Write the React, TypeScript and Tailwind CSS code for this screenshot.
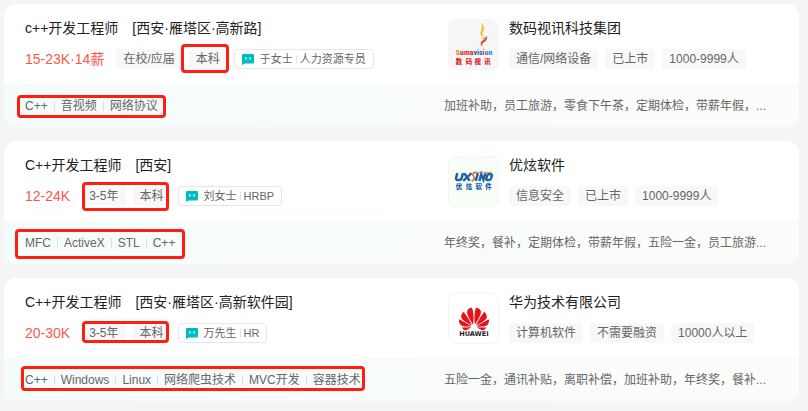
import { ReactNode } from "react";
import { SiHuawei } from "react-icons/si";

type Job = {
  id: number;
  title: string;
  area: string;
  salary: string;
  plainTags: string[];
  markedTags: string[];
  tagMark: string;
  boss: string;
  bossRole: string;
  skills: string[];
  skillMark: string;
  company: string;
  companyTags: string[];
  benefits: string;
  logo: ReactNode;
  logoStyle: string;
};

function SumavisionLogo() {
  return (
    <svg viewBox="0 0 50 50" className="h-full w-full" role="img" aria-label="Sumavision">
      <path
        d="M33.200 2.500c2.600 3.500 3.300 6.500 1 10.500-.6 1.800.2 3.200 1.600 3.800-2.900.2-4.300-1.800-3.400-4.600 1.300-3.700 1.600-6.500.8-9.700z"
        fill="#fbb81c"
      />
      <path
        d="M38.600 16c1 4-1.200 5.600-3.300 7-1.500 1-1.800 2-1 4-2.800-2-2.300-4.700 0-6.200 2-1.300 3.600-2.600 4.300-4.800z"
        fill="#e8432a"
      />
      <path d="M33.400 17.600c1.800 1 3.600.6 5.100-1.400-.3 2.900-3.300 4.200-5.100 1.400z" fill="#f2742a" />
      <text
        x="7"
        y="36"
        fontFamily="'Liberation Sans Narrow', 'Roboto Condensed', 'Liberation Sans', sans-serif"
        fontWeight="700"
        fontSize="8"
      >
        <tspan fill="#ee7a1c">S</tspan>
        <tspan fill="#e01c24">uma</tspan>
        <tspan fill="#2558ae">vis</tspan>
        <tspan fill="#e01c24">i</tspan>
        <tspan fill="#1c7cc8">on</tspan>
      </text>
      <text
        x="7 17 26 36"
        y="44.500"
        fontFamily="'Noto Sans CJK SC', sans-serif"
        fontWeight="900"
        fontSize="6.500"
        fill="#dc2430"
      >
        数码视讯
      </text>
    </svg>
  );
}

function UxsinoLogo() {
  return (
    <svg viewBox="0 0 50 50" className="h-full w-full" role="img" aria-label="UXSINO">
      <path d="M24 15h20v1H25z" fill="#e98a4a" />
      <g fill="none" stroke="#1c62a8" strokeWidth="2.500">
        <path d="M8.500 16.500 7.200 21.300Q6.900 23.400 9 23.400h1.400q2 0 2.600-2.100l1.300-4.800" />
        <path d="M15.500 16.500l5.500 7.800M23 16.500l-8.500 7.800" />
        <path d="M29.500 16.500l-2.200 7.800" />
        <path d="M31 24.500l1.900-6.800 2.300 5.600 1.900-6.700" />
        <path d="M40.300 17.700h2.200q1.600 0 1.200 1.600l-.8 2.600q-.4 1.500-2 1.500h-1.700q-1.500 0-1.100-1.600l.7-2.500q.4-1.600 1.500-1.600z" />
      </g>
      <path d="M28 15.600c-3.500.6-4.600 2.100-3 4 1.400 1.700 1 3.400-2 5" fill="none" stroke="#e4702c" strokeWidth="1.800" />
      <text
        x="7 17 27 37"
        y="33"
        fontFamily="'Noto Sans CJK SC', sans-serif"
        fontWeight="900"
        fontSize="6.500"
        fill="#1c62a8"
      >
        优炫软件
      </text>
    </svg>
  );
}

function HuaweiLogo() {
  return (
    <div className="flex h-full flex-col items-center justify-end pb-1.5">
      <SiHuawei className="h-[30px] w-[30px] text-[#e3141c]" aria-hidden="true" />
      <svg viewBox="0 0 32 7" className="-mt-1 h-[7px] w-8" role="img" aria-label="HUAWEI">
        <text
          x="16"
          y="6"
          textAnchor="middle"
          fontFamily="'DejaVu Sans', sans-serif"
          fontWeight="700"
          fontSize="6.500"
          fill="#1c1c1c"
        >
          HUAWEI
        </text>
      </svg>
    </div>
  );
}

const jobs: Job[] = [
  {
    id: 1,
    title: "c++开发工程师",
    area: "[西安·雁塔区·高新路]",
    salary: "15-23K·14薪",
    plainTags: ["在校/应届"],
    markedTags: ["本科"],
    tagMark: "-top-[5px] -bottom-1 -left-2 -right-0.5",
    boss: "于女士",
    bossRole: "人力资源专员",
    skills: ["C++", "音视频", "网络协议"],
    skillMark: "-top-0.5 -bottom-[3px] -left-2 -right-2",
    company: "数码视讯科技集团",
    companyTags: ["通信/网络设备", "已上市", "1000-9999人"],
    benefits: "加班补助，员工旅游，零食下午茶，定期体检，带薪年假，...",
    logo: <SumavisionLogo />,
    logoStyle: "border-[#f6f6f6] bg-[#f6f6f6]",
  },
  {
    id: 2,
    title: "C++开发工程师",
    area: "[西安]",
    salary: "12-24K",
    plainTags: [],
    markedTags: ["3-5年", "本科"],
    tagMark: "-top-1 -bottom-[5px] left-0 right-0.5",
    boss: "刘女士",
    bossRole: "HRBP",
    skills: ["MFC", "ActiveX", "STL", "C++"],
    skillMark: "-top-[5px] -bottom-[7px] -left-2.5 -right-2.5",
    company: "优炫软件",
    companyTags: ["信息安全", "已上市", "1000-9999人"],
    benefits: "年终奖，餐补，定期体检，带薪年假，五险一金，员工旅游...",
    logo: <UxsinoLogo />,
    logoStyle: "border-[#f4f6f4] bg-[#f8fdf8]",
  },
  {
    id: 3,
    title: "C++开发工程师",
    area: "[西安·雁塔区·高新软件园]",
    salary: "20-30K",
    plainTags: [],
    markedTags: ["3-5年", "本科"],
    tagMark: "-top-0.5 bottom-0 left-0 right-0.5",
    boss: "万先生",
    bossRole: "HR",
    skills: ["C++", "Windows", "Linux", "网络爬虫技术", "MVC开发", "容器技术"],
    skillMark: "-top-[5px] -bottom-0.5 -left-1 -right-1",
    company: "华为技术有限公司",
    companyTags: ["计算机软件", "不需要融资", "10000人以上"],
    benefits: "五险一金，通讯补贴，离职补偿，加班补助，年终奖，餐补...",
    logo: <HuaweiLogo />,
    logoStyle: "border-[#f4f4f4] bg-white",
  },
];

function Tag({ children }: { children: ReactNode }) {
  return (
    <li className="h-5 rounded bg-[#f8f8f8] px-[7px] text-xs leading-5 whitespace-nowrap text-[#666]">
      {children}
    </li>
  );
}

// Red frame drawn over a group of tags or skills
function Mark({ className }: { className: string }) {
  return (
    <span
      aria-hidden="true"
      className={`pointer-events-none absolute rounded border-3 border-[#ff1e10] ${className}`}
    />
  );
}

function ChatIcon() {
  return (
    <svg viewBox="0 0 12 11" className="h-[11px] w-3 shrink-0" aria-hidden="true">
      <path d="M1 0h10q1 0 1 1v7.500q0 1-1 1H2.800L0 11V1q0-1 1-1z" fill="#00bebd" />
      <path d="M3.300 3.200h1.300v2.400H3.300zM7.400 3.200h1.300v2.400H7.400z" fill="#fff" />
    </svg>
  );
}

function JobCard({ job }: { job: Job }) {
  return (
    <li className="overflow-hidden rounded-xl bg-white">
      <div className="grid grid-cols-[88fr_71fr]">
        <div className="pt-3.5 pb-[15px] pl-[21px]">
          <h2 className="text-sm leading-5 whitespace-nowrap text-[#222]">
            <a href="#" className="flex gap-3.5">
              <span>{job.title}</span>
              <span>{job.area}</span>
            </a>
          </h2>
          <div className="mt-[11px] flex h-5 items-center">
            <span className="mr-3 text-sm leading-5 whitespace-nowrap text-[#fe574a]">{job.salary}</span>
            {job.plainTags.length > 0 && (
              <ul className="mr-[7px] flex gap-[7px]">
                {job.plainTags.map((tag) => (
                  <Tag key={tag}>{tag}</Tag>
                ))}
              </ul>
            )}
            <div className="relative mr-[7px]">
              <ul className="flex gap-[7px]">
                {job.markedTags.map((tag) => (
                  <Tag key={tag}>{tag}</Tag>
                ))}
              </ul>
              <Mark className={job.tagMark} />
            </div>
            <button
              type="button"
              className="flex h-5 items-center rounded border border-[#e3e7ed] px-[7px] text-[11px] leading-4 whitespace-nowrap text-[#666]"
            >
              <ChatIcon />
              <span className="ml-1.5">{job.boss}</span>
              <span className="mx-[3px] h-2 w-px bg-[#e0e0e0]" />
              <span>{job.bossRole}</span>
            </button>
          </div>
        </div>

        <div className="flex gap-2.5 pt-[15px] pl-1">
          <div className={`h-[51px] w-[51px] shrink-0 overflow-hidden rounded-lg border ${job.logoStyle}`}>
            {job.logo}
          </div>
          <div className="-mt-px">
            <h3 className="text-sm leading-5 text-[#222]">
              <a href="#">{job.company}</a>
            </h3>
            <ul className="mt-[11px] flex gap-[7px]">
              {job.companyTags.map((tag) => (
                <Tag key={tag}>{tag}</Tag>
              ))}
            </ul>
          </div>
        </div>
      </div>

      <div className="grid grid-cols-[88fr_71fr] bg-linear-to-r from-[#f5fcfc] to-[#fcfbfa] pt-[13px] pb-3 text-xs leading-[18px] text-[#666]">
        <div className="pl-[21px]">
          <div className="relative w-fit">
            <ul className="flex items-center whitespace-nowrap">
              {job.skills.map((skill, i) => (
                <li key={skill} className="flex items-center">
                  {i > 0 && <span className="mx-1.5 h-2.5 w-px bg-[#dcdfe0]" />}
                  {skill}
                </li>
              ))}
            </ul>
            <Mark className={job.skillMark} />
          </div>
        </div>
        <p className="truncate pr-5">{job.benefits}</p>
      </div>
    </li>
  );
}

export default function App() {
  return (
    <main className="min-h-screen bg-[#f5f5f8] pt-1 pr-[9px] pb-2.5 pl-1 font-['Liberation_Sans','Noto_Sans_CJK_SC',sans-serif]">
      <ul className="flex flex-col gap-3.5">
        {jobs.map((job) => (
          <JobCard key={job.id} job={job} />
        ))}
      </ul>
    </main>
  );
}
